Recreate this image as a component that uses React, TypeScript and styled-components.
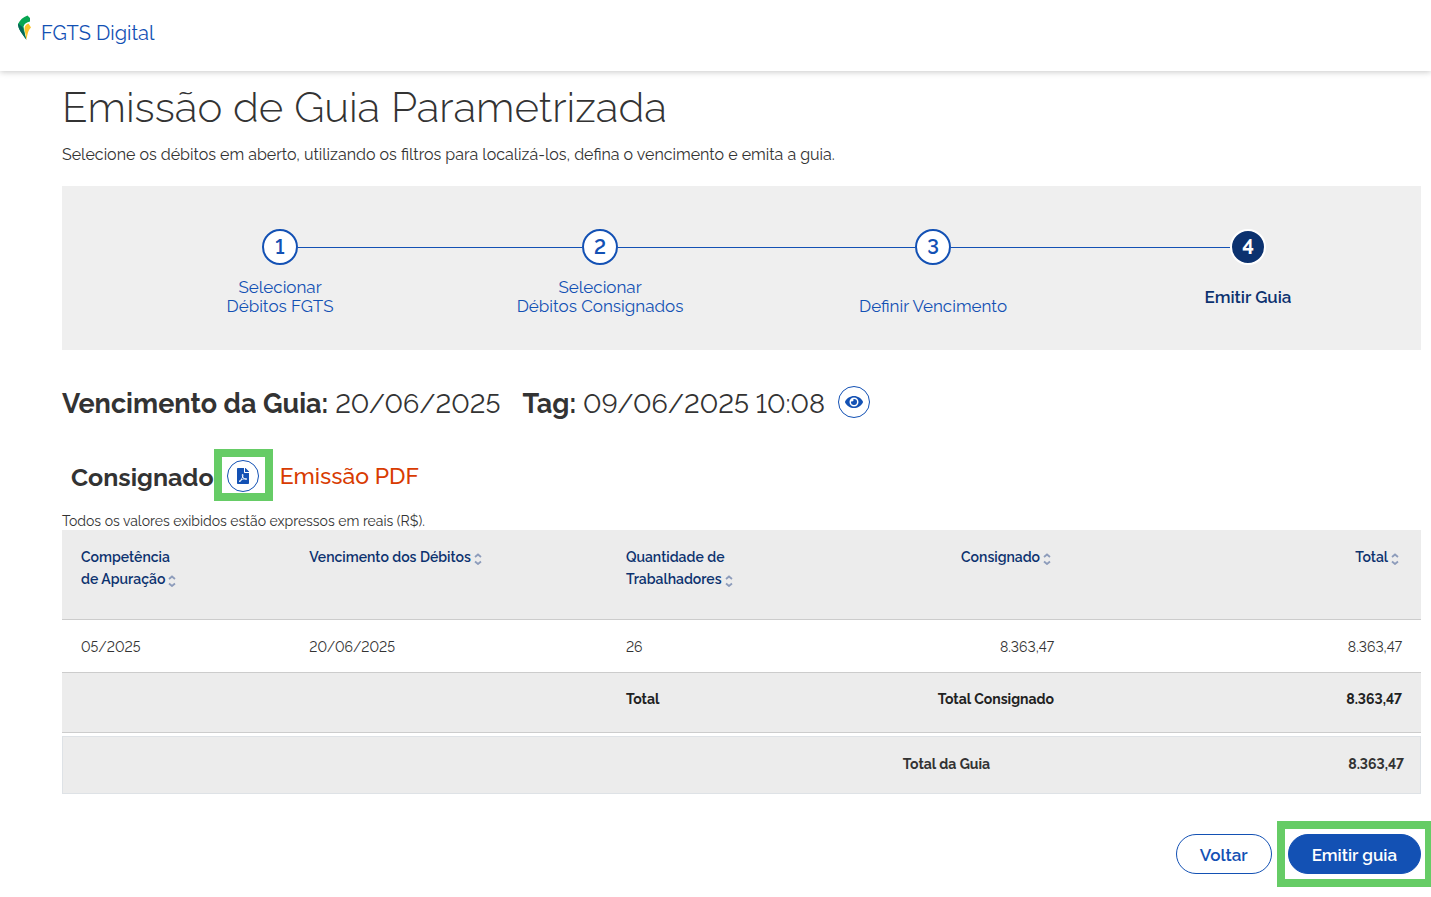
import React from "react";
import styled, { createGlobalStyle, css } from "styled-components";
import { FaEye, FaFilePdf } from "react-icons/fa";

const Global = createGlobalStyle`
  *, *::before, *::after { box-sizing: border-box; }
  body { margin: 0; background: #fff; color: #333; font-family: Raleway, Lato, "Open Sans", sans-serif; font-size: 16px; font-variant-numeric: lining-nums; }
  h1, h2, h3, p, ol { margin: 0; padding: 0; }
  button { font-family: inherit; font-variant-numeric: inherit; cursor: pointer; }
`;

const Header = styled.header`
  display: flex;
  align-items: flex-start;
  height: 71px;
  padding: 15px 17px;
  box-shadow: 0 1px 6px rgba(0, 0, 0, 0.22);
`;

const Brand = styled.a`
  display: flex;
  gap: 9px;
  color: #1351b4;
  font-size: 20px;
  line-height: 36px;
  text-decoration: none;
`;

const Main = styled.main`
  padding: 13px 10px 0 62px;
`;

const Title = styled.h1`
  font-size: 42px;
  font-weight: 300;
  line-height: 48px;
`;

const Lead = styled.p`
  margin-top: 11px;
  font-size: 16px;
  line-height: 24px;
`;

const Steps = styled.ol`
  display: flex;
  align-items: flex-start;
  height: 164px;
  margin-top: 19px;
  padding: 43px 155px 0 200px;
  background: #efefef;
  list-style: none;
`;

const Step = styled.li`
  display: flex;
  flex: 0 0 36px;
  flex-direction: column;
  align-items: center;
  min-width: 0;
`;

const StepCircle = styled.button<{ $current?: boolean }>`
  width: 36px;
  height: 36px;
  padding: 0;
  border: 2px solid ${(p) => (p.$current ? "#fff" : "#1351b4")};
  border-radius: 50%;
  background: ${(p) => (p.$current ? "#0c326f" : "#fff")};
  color: ${(p) => (p.$current ? "#fff" : "#1351b4")};
  font-size: 20px;
  font-weight: ${(p) => (p.$current ? 700 : 600)};
  line-height: 32px;
`;

const StepLabel = styled.span<{ $current?: boolean }>`
  display: flex;
  align-items: flex-end;
  height: ${(p) => (p.$current ? "29px" : "38px")};
  margin-top: 13px;
  color: ${(p) => (p.$current ? "#0c326f" : "#1351b4")};
  font-size: 17px;
  font-weight: ${(p) => (p.$current ? 600 : 400)};
  line-height: 19px;
  text-align: center;
  white-space: pre;
`;

const Connector = styled.li<{ $grow: number }>`
  flex: ${(p) => p.$grow} 1 0;
  height: 1px;
  margin-top: 18px;
  background: #1351b4;
`;

const Summary = styled.h2`
  display: flex;
  align-items: flex-start;
  margin-top: 36px;
  font-size: 27px;
  font-weight: 400;
  line-height: 36px;
  white-space: pre;
`;

const SummaryItem = styled.span`
  margin-right: 22px;

  &:last-of-type {
    margin-right: 13px;
  }
`;

const RoundButton = styled.button`
  display: flex;
  align-items: center;
  justify-content: center;
  width: 32px;
  height: 32px;
  padding: 0;
  border: 1px solid #1351b4;
  border-radius: 50%;
  background: #fff;
  color: #1351b4;
`;

const Section = styled.div`
  display: flex;
  align-items: center;
  margin-top: 27px;
  padding-left: 9px;
`;

const SectionTitle = styled.h3`
  padding-top: 4px;
  font-size: 25px;
  font-weight: 700;
  line-height: 32px;
`;

const Highlight = styled.div`
  margin: 0 7px 0 0;
  padding: 3px 6px 1px 5px;
  border: 8px solid #66cc66;
`;

const Annotation = styled.span`
  padding-top: 2px;
  color: #d83b01;
  font-size: 23px;
  font-weight: 500;
  line-height: 32px;
`;

const Note = styled.p`
  margin-top: 11px;
  font-size: 14px;
  line-height: 18px;
`;

const Table = styled.table`
  width: 100%;
  border-collapse: separate;
  border-spacing: 0;
  table-layout: fixed;
  font-size: 14px;
  line-height: 22px;
`;

const cell = css<{ $right?: boolean }>`
  padding: 16px 19px 14px;
  border-bottom: 1px solid #ccc;
  text-align: ${(p) => (p.$right ? "right" : "left")};
  vertical-align: top;
`;

const HeadCell = styled.th<{ $right?: boolean }>`
  ${cell}
  height: 90px;
  background: #ececec;
  color: #0c326f;
  font-weight: 600;
`;

const Cell = styled.td<{ $right?: boolean }>`
  ${cell}
`;

const TotalCell = styled.td<{ $right?: boolean }>`
  ${cell}
  height: 60px;
  padding-top: 15px;
  background: #ececec;
  color: #222;
  font-weight: 700;
`;

const SortButton = styled.button`
  padding: 0;
  border: 0;
  background: none;
  color: inherit;
  font-size: inherit;
  font-weight: inherit;
  line-height: inherit;
  text-align: inherit;
  white-space: pre;

  svg {
    margin: 0 3px;
    vertical-align: -3px;
  }
`;

const GrandTable = styled(Table)`
  margin-top: 3px;
  border: 1px solid #dee2e6;
  background: #ececec;
`;

const GrandCell = styled.td`
  height: 56px;
  padding: 16px;
  font-weight: 700;
  text-align: right;
  vertical-align: top;
`;

const Actions = styled.div`
  display: flex;
  align-items: center;
  justify-content: flex-end;
  gap: 5px;
  margin: 27px -10px 10px 0;
`;

const ActionHighlight = styled(Highlight)`
  margin: 0;
  padding: 5px 4px 5px 3px;
  border-right-width: 6px;
`;

const PillButton = styled.button<{ $primary?: boolean }>`
  display: block;
  height: 40px;
  padding: 2px 23px 0;
  border: 1px solid #1351b4;
  border-radius: 20px;
  background: ${(p) => (p.$primary ? "#1351b4" : "#fff")};
  color: ${(p) => (p.$primary ? "#fff" : "#1351b4")};
  font-size: 17px;
  font-weight: 600;
`;

const Logo = () => (
  <svg width="15" height="26" viewBox="0 0 15 26" aria-hidden="true">
    <path d="M10.500 0.500 13 3V6.500C9.500 7.200 7.500 8.500 6.500 11.500L9 24C5 18.500 1 14 1 9 3 5 6 2 10.500 0.500Z" fill="#08a652" />
    <path d="M1 8.500 5.500 12 9.500 25C5 18.500 1 14 1 8.500Z" fill="#06665a" />
    <path d="M11.500 8.500 14 12.500C11.500 15 10.500 18 9.500 25L7.500 14C7.500 11 9 9.500 11.500 8.500Z" fill="#fdc52c" />
  </svg>
);

const SortIcon = () => (
  <svg width="8" height="12" viewBox="0 0 8 12" fill="none" stroke="#8d9cbb" strokeWidth="1.8" aria-hidden="true">
    <path d="M1 4 4 1.500 7 4M1 8.500 4 11 7 8.500" />
  </svg>
);

const steps = [
  { label: "Selecionar\nDébitos FGTS", grow: 284 },
  { label: "Selecionar\nDébitos Consignados", grow: 297 },
  { label: "Definir Vencimento", grow: 279 },
  { label: "Emitir Guia", grow: 0 },
];

const columns = [
  { label: "Competência\nde Apuração", width: "16.8%" },
  { label: "Vencimento dos Débitos", width: "23.3%" },
  { label: "Quantidade de\nTrabalhadores", width: "17%" },
  { label: "Consignado", width: "17.3%", right: true },
  { label: "Total", width: "25.6%", right: true },
];

export default function App() {
  return (
    <>
      <Global />
      <Header>
        <Brand href="#">
          <Logo />
          FGTS Digital
        </Brand>
      </Header>
      <Main>
        <Title>Emissão de Guia Parametrizada</Title>
        <Lead>Selecione os débitos em aberto, utilizando os filtros para localizá-los, defina o vencimento e emita a guia.</Lead>
        <Steps>
          {steps.map((s, i) => {
            const current = i === steps.length - 1;
            return (
              <React.Fragment key={s.label}>
                <Step aria-current={current ? "step" : undefined}>
                  <StepCircle type="button" $current={current}>{i + 1}</StepCircle>
                  <StepLabel $current={current}>{s.label}</StepLabel>
                </Step>
                {!current && <Connector $grow={s.grow} aria-hidden="true" />}
              </React.Fragment>
            );
          })}
        </Steps>
        <Summary>
          <SummaryItem><b>Vencimento da Guia:</b> 20/06/2025</SummaryItem>
          <SummaryItem><b>Tag:</b> 09/06/2025 10:08</SummaryItem>
          <RoundButton type="button" aria-label="Visualizar"><FaEye size={18} /></RoundButton>
        </Summary>
        <Section>
          <SectionTitle>Consignado</SectionTitle>
          <Highlight>
            <RoundButton type="button" aria-label="Emitir PDF"><FaFilePdf size={16} /></RoundButton>
          </Highlight>
          <Annotation>Emissão PDF</Annotation>
        </Section>
        <Note>Todos os valores exibidos estão expressos em reais (R$).</Note>
        <Table>
          <colgroup>
            {columns.map((c) => <col key={c.label} style={{ width: c.width }} />)}
          </colgroup>
          <thead>
            <tr>
              {columns.map((c) => (
                <HeadCell key={c.label} scope="col" $right={c.right}>
                  <SortButton type="button">{c.label}<SortIcon /></SortButton>
                </HeadCell>
              ))}
            </tr>
          </thead>
          <tbody>
            <tr>
              <Cell>05/2025</Cell>
              <Cell>20/06/2025</Cell>
              <Cell>26</Cell>
              <Cell $right>8.363,47</Cell>
              <Cell $right>8.363,47</Cell>
            </tr>
          </tbody>
          <tfoot>
            <tr>
              <TotalCell colSpan={2} />
              <TotalCell>Total</TotalCell>
              <TotalCell $right>Total Consignado</TotalCell>
              <TotalCell $right>8.363,47</TotalCell>
            </tr>
          </tfoot>
        </Table>
        <GrandTable>
          <colgroup>
            <col style={{ width: "69.5%" }} />
            <col />
          </colgroup>
          <tbody>
            <tr>
              <GrandCell>Total da Guia</GrandCell>
              <GrandCell>8.363,47</GrandCell>
            </tr>
          </tbody>
        </GrandTable>
        <Actions>
          <PillButton type="button">Voltar</PillButton>
          <ActionHighlight>
            <PillButton type="button" $primary>Emitir guia</PillButton>
          </ActionHighlight>
        </Actions>
      </Main>
    </>
  );
}
